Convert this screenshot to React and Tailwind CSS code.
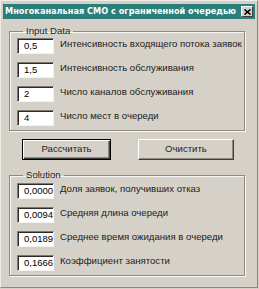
import React from "react";

const inputs = [
  { value: "0,5", label: "Интенсивность входящего потока заявок" },
  { value: "1,5", label: "Интенсивность обслуживания" },
  { value: "2", label: "Число каналов обслуживания" },
  { value: "4", label: "Число мест в очереди" },
];

const results = [
  { value: "0,0000", label: "Доля заявок, получивших отказ" },
  { value: "0,0094", label: "Средняя длина очереди" },
  { value: "0,0189", label: "Среднее время ожидания в очереди" },
  { value: "0,1666", label: "Коэффициент занятости" },
];

// sunken edit box, classic windows look
const Field = ({ value }) => (
  <div className="w-[37px] h-[16px] shrink-0 bg-white overflow-hidden whitespace-nowrap pl-[6px] text-[9.5px] leading-[14px] text-black border-t border-l border-[#7b7972] border-b border-r border-b-[#f4f3ef] border-r-[#f4f3ef] shadow-[inset_1px_1px_0_#2a2a2a]">
    {value}
  </div>
);

const Row = ({ value, label, mb }) => (
  <div className={`flex items-start gap-[6px] ${mb}`}>
    <Field value={value} />
    <span className="text-[9.6px] leading-[12px] text-[#1c1c1c] whitespace-nowrap">{label}</span>
  </div>
);

const Group = ({ title, children, className }) => (
  <fieldset className={`ml-[5px] w-[236px] border border-[#8d8a82] shadow-[inset_1px_1px_0_#f7f6f2,1px_1px_0_#f7f6f2] pl-[7px] ${className}`}>
    <legend className="ml-[6px] px-[3px] text-[9.6px] leading-[12px] text-[#1c1c1c]">{title}</legend>
    {children}
  </fieldset>
);

export default function App() {
  return (
    <div
      className="w-[259px] h-[289px] bg-[#d5d1c8] flex flex-col"
      style={{ fontFamily: '"Liberation Sans", Arial, sans-serif' }}
    >
      <div className="w-[258px] h-[288px] border-l border-t border-[#eeece6] border-r border-b border-r-[#8a877f] border-b-[#8a877f] flex flex-col pt-[3px] pl-[2px] pr-[2px]">
        {/* title bar */}
        <div className="h-[15px] bg-[#2b7e7a] flex items-center justify-between pl-[2px] pr-[2px] overflow-hidden">
          <span className="text-white font-bold text-[8.2px] leading-[15px] whitespace-nowrap" style={{ fontFamily: '"DejaVu Sans", Verdana, sans-serif' }}>
            Многоканальная СМО с ограниченной очередью
          </span>
          <div className="w-[12px] h-[11px] shrink-0 bg-[#d5d1c8] border-t border-l border-white border-b border-r border-b-[#404040] border-r-[#404040] flex items-center justify-center">
            <svg width="7" height="6" viewBox="0 0 7 6">
              <path d="M0.5 0.5 L6.5 5.5 M6.5 0.5 L0.5 5.5" stroke="#000" strokeWidth="1.6" />
            </svg>
          </div>
        </div>

        <div className="pl-[1px] flex flex-col">
          <Group title="Input Data" className="mt-[6px] h-[106px] pt-[1px]">
            {inputs.map((r, i) => (
              <Row key={i} value={r.value} label={r.label} mb={i < 3 ? "mb-[8px]" : ""} />
            ))}
          </Group>

          <div className="flex mt-[8px] h-[21px]">
            <button className="ml-[18px] w-[89px] h-[21px] bg-[#d5d1c8] border border-black text-[9.6px] text-[#1c1c1c] shadow-[inset_1px_1px_0_#fff,inset_-1px_-1px_0_#404040,inset_-2px_-2px_0_#8a877f]">
              Рассчитать
            </button>
            <button className="ml-[27px] w-[96px] h-[21px] bg-[#d5d1c8] border-t border-l border-white border-b border-r border-b-[#404040] border-r-[#404040] text-[9.6px] text-[#1c1c1c] shadow-[inset_-1px_-1px_0_#8a877f]">
              Очистить
            </button>
          </div>

          <Group title="Solution" className="mt-[9px] h-[107px] pt-[2px]">
            {results.map((r, i) => (
              <Row key={i} value={r.value} label={r.label} mb={i < 3 ? "mb-[8px]" : ""} />
            ))}
          </Group>
        </div>
      </div>
    </div>
  );
}
